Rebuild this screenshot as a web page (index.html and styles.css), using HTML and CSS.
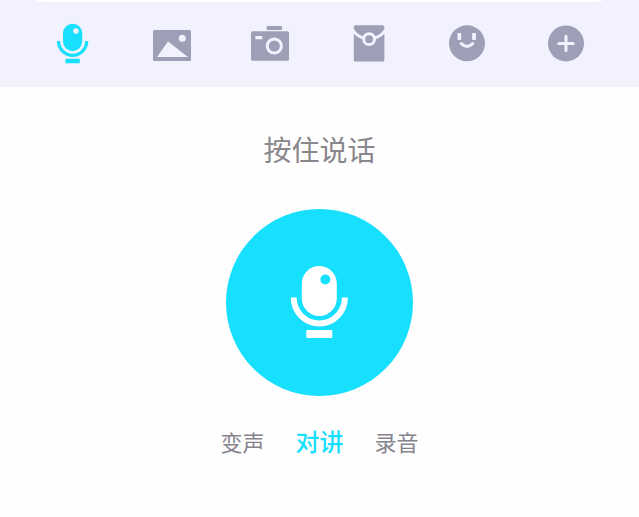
FILE: index.html
```
<!DOCTYPE html>
<html lang="zh-CN">
<head>
	<meta charset="UTF-8">
	<meta name="viewport" content="width=device-width, initial-scale=1.0">
	<title>按住说话</title>
	<link rel="stylesheet" href="styles.css">
</head>
<body>
	<svg class="sprite" aria-hidden="true">
		<symbol id="mic" viewBox="0 0 80 80">
			<path fill="currentColor" fill-rule="evenodd" d="M39.3 3A17.5 17.5 0 0 1 56.8 20.5V35.5A17.5 17.5 0 0 1 21.8 35.5V20.5A17.5 17.5 0 0 1 39.3 3ZM45.3 11.5a5 5 0 1 0 0 10a5 5 0 1 0 0-10Z"/>
			<path fill="none" stroke="currentColor" stroke-width="6" d="M13.7 34.5A25.6 26 0 0 0 64.9 34.5"/>
			<rect fill="currentColor" x="26.3" y="67" width="26" height="8" rx="1"/>
		</symbol>
	</svg>
	<header class="panel">
		<div class="field">
			<input class="field-input" type="text" aria-label="消息">
		</div>
		<nav class="tools">
			<button class="tool tool-active" type="button" aria-label="语音">
				<svg class="icon-mic"><use href="#mic"/></svg>
			</button>
			<button class="tool" type="button" aria-label="图片">
				<svg class="icon" viewBox="0 0 40 40">
					<rect class="fill" x="1" y="6" width="38" height="31" rx="1.5"/>
					<circle class="cut" cx="30.3" cy="14.3" r="3.5"/>
					<path class="cut" d="M5 33L16 17.5L36 33Z"/>
				</svg>
			</button>
			<button class="tool" type="button" aria-label="拍照">
				<svg class="icon" viewBox="0 0 40 40">
					<rect class="fill" x="16.7" y="2" width="15.3" height="4" rx="0.8"/>
					<rect class="fill" x="1" y="7.3" width="38" height="29.4" rx="1.5"/>
					<rect class="cut" x="5.3" y="12" width="7" height="3.3" rx="0.5"/>
					<circle class="line" cx="24.3" cy="22" r="7.1"/>
				</svg>
			</button>
			<button class="tool" type="button" aria-label="红包">
				<svg class="icon" viewBox="0 0 40 40">
					<rect class="fill" x="4.8" y="1.2" width="30.6" height="36.4" rx="1.5"/>
					<path class="line" d="M4 6.2Q8 12.5 14.5 13.8M36.2 6.2Q32.2 12.5 25.7 13.8"/>
					<circle class="line" cx="20.1" cy="15.2" r="5.4"/>
				</svg>
			</button>
			<button class="tool" type="button" aria-label="表情">
				<svg class="icon" viewBox="0 0 40 40">
					<circle class="fill" cx="20" cy="19.3" r="18"/>
					<rect class="cut" x="10.5" y="9" width="3.7" height="7" rx="0.5"/>
					<rect class="cut" x="25.2" y="9" width="3.7" height="7" rx="0.5"/>
					<path class="line" d="M14.3 19.6Q20 25 25.7 19.6"/>
				</svg>
			</button>
			<button class="tool" type="button" aria-label="更多">
				<svg class="icon" viewBox="0 0 40 40">
					<circle class="fill" cx="20" cy="19.4" r="18"/>
					<path class="line" d="M12.8 19.4H27.2M20 12.2V26.6"/>
				</svg>
			</button>
		</nav>
	</header>
	<main class="talk">
		<h1 class="title">按住说话</h1>
		<button class="record" type="button" aria-label="按住说话">
			<svg class="record-mic"><use href="#mic"/></svg>
		</button>
		<div class="modes">
			<button class="mode" type="button">变声</button>
			<button class="mode mode-active" type="button">对讲</button>
			<button class="mode" type="button">录音</button>
		</div>
	</main>
</body>
</html>
```
FILE: styles.css
```
* {
	box-sizing: border-box;
	margin: 0;
	padding: 0;
}

body {
	background-color: #fefefe;
	font-family: "Noto Sans CJK SC", sans-serif;
}

button {
	border: none;
	background: none;
	font-family: inherit;
	cursor: pointer;
}

svg {
	display: block;
}

.sprite {
	display: none;
}

.panel {
	background-color: #f2f2ff;
	padding: 0 24px 21px;
}

/* only the lower edge of the message field shows */
.field {
	display: flex;
	align-items: flex-end;
	height: 2px;
	overflow: hidden;
	margin-bottom: 20px;
}

.field-input {
	flex: 1;
	flex-shrink: 0;
	height: 60px;
	border: none;
	border-radius: 20px;
	background-color: #fff;
	outline: none;
}

.tools {
	display: grid;
	grid-template-columns: repeat(6, 1fr);
}

.tool {
	display: flex;
	justify-content: center;
	align-items: center;
	height: 44px;
	color: #9f9eb7;
}

.tool-active {
	color: #17dffe;
}

.icon {
	width: 40px;
	height: 40px;
}

.icon-mic {
	width: 44px;
	height: 44px;
}

.fill {
	fill: currentColor;
}

.cut {
	fill: #f2f2ff;
}

.line {
	fill: none;
	stroke: #f2f2ff;
	stroke-width: 3;
	stroke-linecap: round;
}

.talk {
	display: flex;
	flex-direction: column;
	align-items: center;
	padding: 42px 24px;
}

.title {
	font-size: 28px;
	font-weight: 400;
	line-height: 40px;
	color: #89868c;
}

.record {
	display: flex;
	justify-content: center;
	align-items: center;
	width: 187px;
	height: 187px;
	margin: 40px 0 29px;
	border-radius: 50%;
	background-color: #17dffe;
	color: #fff;
}

.record-mic {
	width: 80px;
	height: 80px;
}

.modes {
	display: flex;
	align-items: center;
	gap: 31px;
}

.mode {
	font-size: 22px;
	font-weight: 400;
	line-height: 32px;
	color: #86838f;
}

.mode-active {
	font-size: 24px;
	font-weight: 500;
	color: #17dffe;
}
```
